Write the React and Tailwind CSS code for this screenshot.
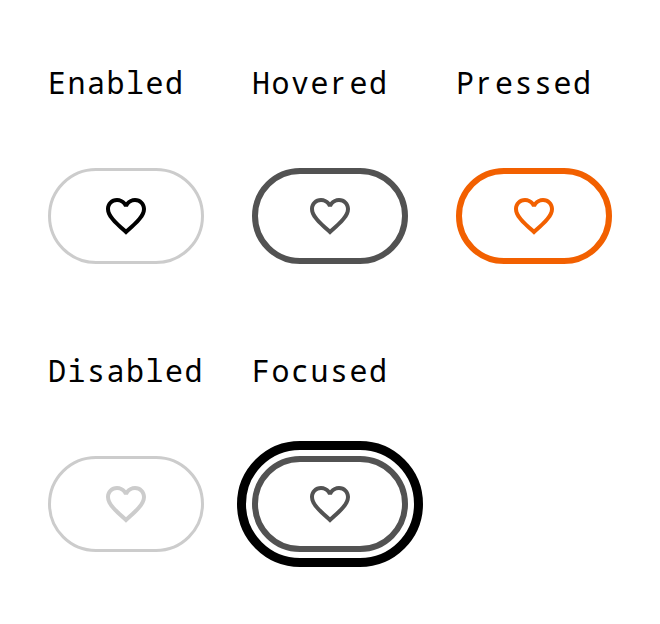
function Heart() {
  return (
    <svg viewBox="0 0 24 24" className="size-12 shrink-0" fill="currentColor">
      <path d="M16.5 3c-1.74 0-3.41.81-4.5 2.09C10.91 3.81 9.24 3 7.5 3 4.42 3 2 5.42 2 8.5c0 3.78 3.4 6.86 8.55 11.54L12 21.35l1.45-1.32C18.6 15.36 22 12.28 22 8.5 22 5.42 19.58 3 16.5 3zm-4.4 15.55l-.1.1-.1-.1C7.14 14.24 4 11.39 4 8.5 4 6.5 5.5 5 7.5 5c1.54 0 3.04.99 3.57 2.36h1.87C13.46 5.99 14.96 5 16.5 5c2 0 3.5 1.5 3.5 3.5 0 2.89-3.14 5.74-7.9 10.05z" />
    </svg>
  );
}

// The monospaced "r" has a slab foot; the proportional one is plain, so it is set in a full-width cell.
function Label({ text }) {
  return (
    <h2 className="h-[72px] whitespace-nowrap font-['Noto_Sans_Mono','DejaVu_Sans_Mono',monospace] text-[30px] leading-[70px] tracking-[1.5px] text-black">
      {[...text].map((char, i) =>
        char === "r" ? (
          <span key={i} className="inline-block w-[19.5px] pl-[1.5px] font-['Noto_Sans',sans-serif]">r</span>
        ) : (
          char
        )
      )}
    </h2>
  );
}

const states = [
  { label: "Enabled", style: "border-3 border-[#cccccc] text-black" },
  { label: "Hovered", style: "border-6 border-[#525252] text-[#525252]" },
  { label: "Pressed", style: "border-6 border-[#f26000] text-[#f26000]" },
  { label: "Disabled", style: "border-3 border-[#cccccc] text-[#cccccc]" },
  { label: "Focused", style: "border-6 border-[#525252] text-[#525252] outline-9 outline-offset-6 outline-black" },
];

export default function App() {
  return (
    <main className="grid h-[624px] w-[660px] grid-cols-[156px_156px_156px] grid-rows-[216px_216px] content-start gap-x-12 gap-y-[72px] bg-white px-12 pt-12">
      {states.map(({ label, style }) => (
        <section key={label} className="flex flex-col gap-12">
          <Label text={label} />
          <button type="button" aria-label={label} className={`flex h-24 w-[156px] items-center justify-center rounded-[48px] ${style}`}>
            <Heart />
          </button>
        </section>
      ))}
    </main>
  );
}
